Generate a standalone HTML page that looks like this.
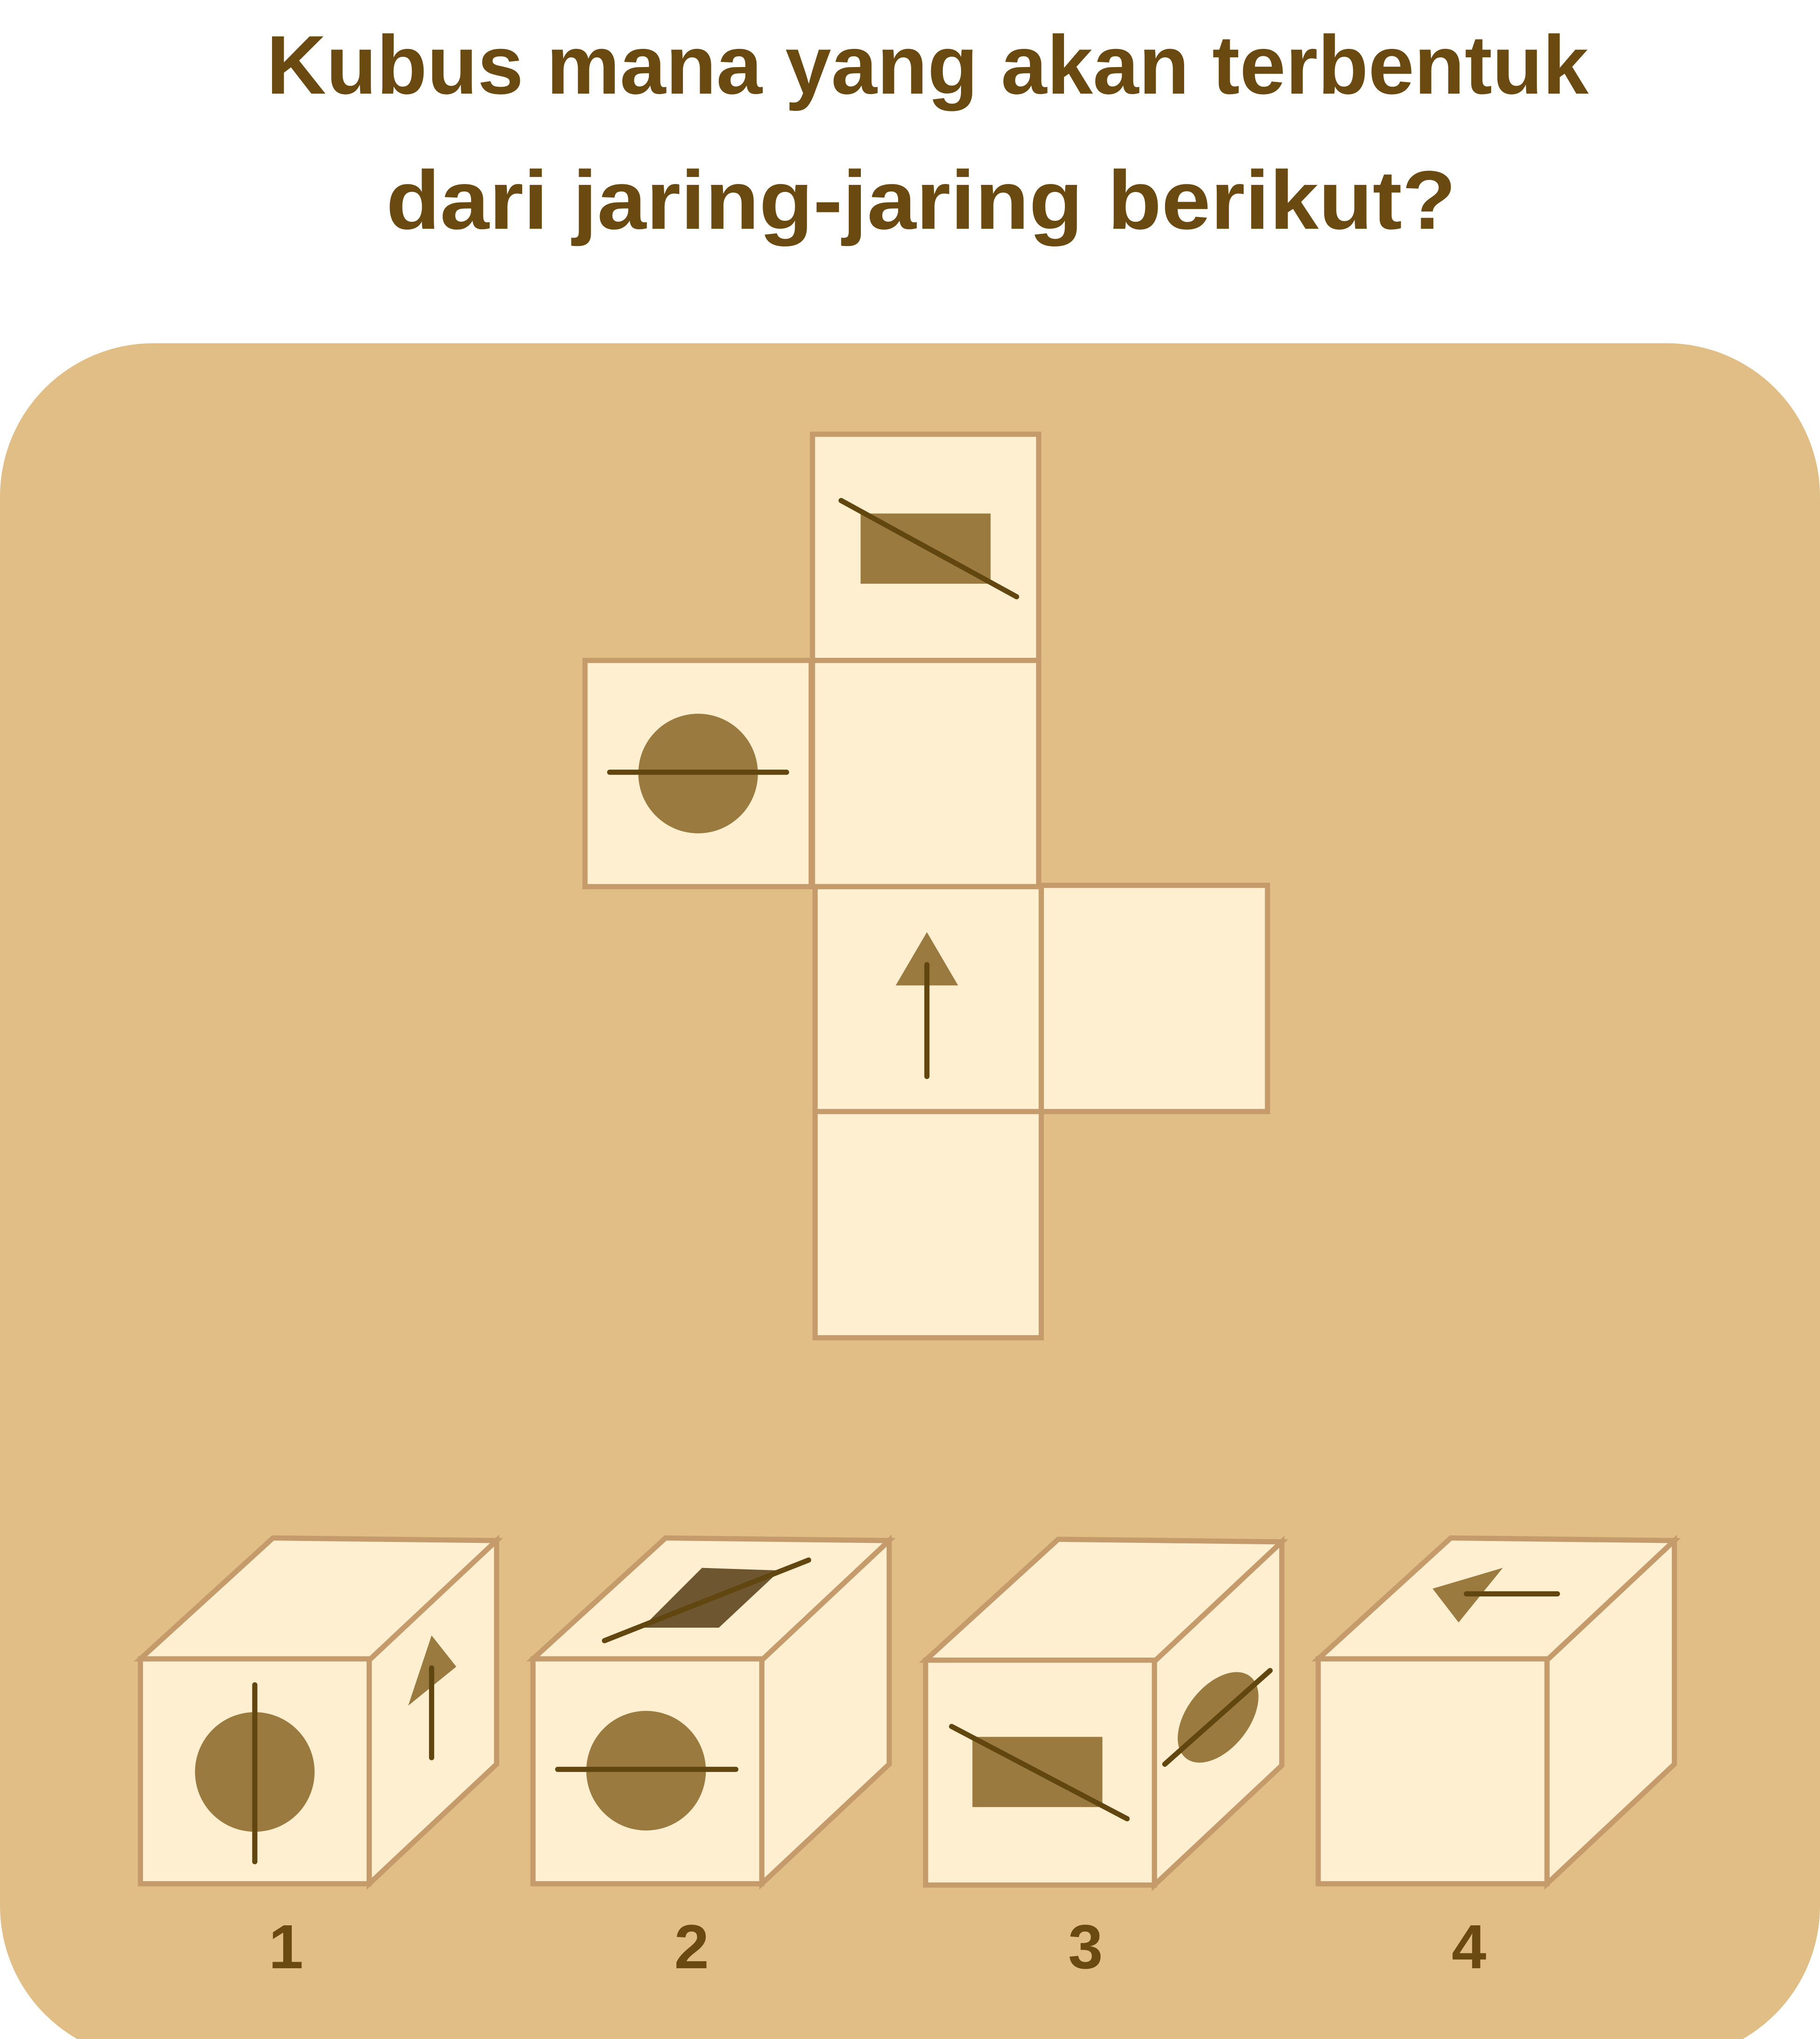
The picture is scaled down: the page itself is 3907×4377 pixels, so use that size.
<!DOCTYPE html>
<html><head><meta charset="utf-8"><style>
html,body{margin:0;padding:0;background:#fff}
svg{display:block}
text{font-family:"Liberation Sans",sans-serif;font-weight:bold;fill:#6B4A12}
</style></head><body>
<svg width="3907" height="4377" viewBox="0 0 1400 1568.4" xmlns="http://www.w3.org/2000/svg">
<rect width="1400" height="1568.4" fill="#fff"/>
<text x="205" y="72" font-size="64" textLength="1017" lengthAdjust="spacingAndGlyphs">Kubus mana yang akan terbentuk</text>
<text x="297" y="176" font-size="64" textLength="823" lengthAdjust="spacingAndGlyphs">dari jaring-jaring berikut?</text>
<rect x="0" y="264" width="1400" height="1320" rx="118" fill="#E1BE85"/>
<g fill="#FDEFD0" stroke="#C59B6C" stroke-width="4">
<rect x="625" y="334" width="174" height="174"/>
<rect x="450" y="508" width="174" height="174"/>
<rect x="625" y="508" width="174" height="174"/>
<rect x="627" y="682" width="174" height="173"/>
<rect x="801" y="681" width="174" height="174"/>
<rect x="627" y="855" width="174" height="174"/>
</g>
<g fill="#9A7A3E">
<rect x="662" y="395" width="100" height="54"/>
<circle cx="537" cy="595" r="46"/>
<polygon points="713,717 737,758 689,758"/>
</g>
<g stroke="#62460F" stroke-width="4" stroke-linecap="round">
<line x1="647" y1="385" x2="782" y2="459"/>
<line x1="469" y1="594" x2="605" y2="594"/>
<line x1="713" y1="742" x2="713" y2="828"/>
</g>
<defs>
<g id="cube">
<polygon points="0,93 102,0 274,2 176,94" fill="#FDEFD0" stroke="#C59B6C" stroke-width="4"/>
<polygon points="176,94 274,2 274,174 176,266" fill="#FDEFD0" stroke="#C59B6C" stroke-width="4"/>
<rect x="0" y="93" width="176" height="173" fill="#FDEFD0" stroke="#C59B6C" stroke-width="4"/>
</g>
</defs>
<use href="#cube" x="108" y="1183"/>
<use href="#cube" x="410" y="1183"/>
<use href="#cube" x="712" y="1184"/>
<use href="#cube" x="1014" y="1183"/>
<circle cx="196" cy="1363" r="46" fill="#9A7A3E"/>
<polygon points="332,1258 351,1282 314,1312" fill="#9A7A3E"/>
<polygon points="540,1206 600,1208 553,1252 494,1252" fill="#6E5630"/>
<circle cx="497" cy="1362" r="46" fill="#9A7A3E"/>
<rect x="748" y="1336" width="100" height="54" fill="#9A7A3E"/>
<ellipse cx="937" cy="1321" rx="24" ry="40" transform="rotate(38 937 1321)" fill="#9A7A3E"/>
<polygon points="1102,1222 1156,1206 1122,1248" fill="#9A7A3E"/>
<g stroke="#62460F" stroke-width="4" stroke-linecap="round">
<line x1="196" y1="1296" x2="196" y2="1432"/>
<line x1="332" y1="1283" x2="332" y2="1352"/>
<line x1="465" y1="1262" x2="622" y2="1200"/>
<line x1="429" y1="1361" x2="566" y2="1361"/>
<line x1="732" y1="1328" x2="867" y2="1399"/>
<line x1="896" y1="1357" x2="977" y2="1285"/>
<line x1="1128" y1="1226" x2="1198" y2="1226"/>
</g>
<g font-size="48" text-anchor="middle">
<text x="220" y="1514">1</text>
<text x="532" y="1514">2</text>
<text x="835" y="1514">3</text>
<text x="1130" y="1514">4</text>
</g>
</svg>
</body></html>
